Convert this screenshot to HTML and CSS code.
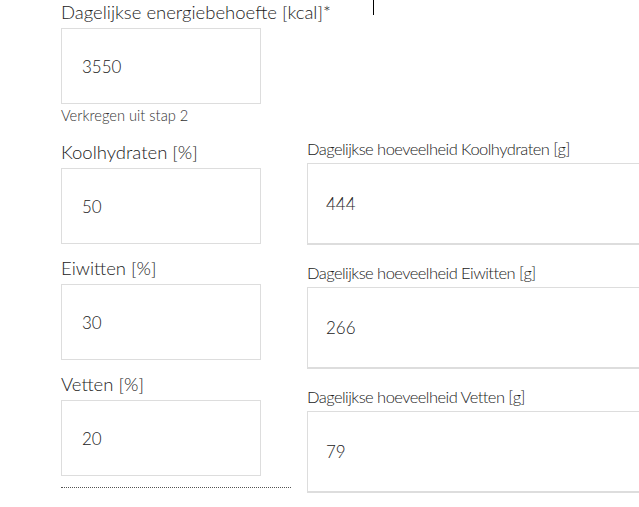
FILE: index.html
```html
<!DOCTYPE html>
<html lang="nl">
<head>
    <meta charset="UTF-8">
    <meta name="viewport" content="width=device-width, initial-scale=1.0">
    <title>Macronutriënten</title>
    <link rel="stylesheet" href="styles.css">
</head>
<body>
    <span class="cursor"></span>
    <div class="form">
        <div class="field energy">
            <label class="label" for="kcal">Dagelijkse energiebehoefte [kcal]*</label>
            <input class="input" id="kcal" type="text" value="3550">
            <p class="hint">Verkregen uit stap 2</p>
        </div>
        <div class="columns">
            <div class="col-left">
                <div class="field">
                    <label class="label" for="kh">Koolhydraten [%]</label>
                    <input class="input" id="kh" type="text" value="50">
                </div>
                <div class="field">
                    <label class="label" for="ei">Eiwitten [%]</label>
                    <input class="input" id="ei" type="text" value="30">
                </div>
                <div class="field">
                    <label class="label" for="ve">Vetten [%]</label>
                    <input class="input" id="ve" type="text" value="20">
                </div>
                <div class="divider"></div>
            </div>
            <div class="col-right">
                <div class="field">
                    <label class="label small" for="khg">Dagelijkse hoeveelheid Koolhydraten [g]</label>
                    <input class="input wide" id="khg" type="text" value="444" readonly>
                </div>
                <div class="field">
                    <label class="label small" for="eig">Dagelijkse hoeveelheid Eiwitten [g]</label>
                    <input class="input wide" id="eig" type="text" value="266" readonly>
                </div>
                <div class="field">
                    <label class="label small" for="veg">Dagelijkse hoeveelheid Vetten [g]</label>
                    <input class="input wide" id="veg" type="text" value="79" readonly>
                </div>
            </div>
        </div>
    </div>
</body>
</html>
```

FILE: styles.css
```css
body {
    margin: 0;
    font-family: Lato, 'Open Sans', sans-serif;
    font-weight: 300;
    color: #222;
    background: #fff;
    overflow: hidden;
}
.cursor {
    position: absolute;
    left: 373px;
    top: 0;
    width: 1px;
    height: 15px;
    background: #000;
}
.form {
    padding: 1px 0 0 61px;
}
.field {
    display: flex;
    flex-direction: column;
}
.label {
    font-size: 18.5px;
    line-height: 22px;
    margin-bottom: 5px;
}
.input {
    box-sizing: border-box;
    width: 200px;
    height: 76px;
    border: 1px solid #ddd;
    padding: 0 0 0 20px;
    font-family: inherit;
    font-weight: 300;
    font-size: 17px;
    color: #222;
    outline: none;
}
.hint {
    margin: 2px 0 0;
    font-size: 14.7px;
    color: #333;
}
.columns {
    display: flex;
    gap: 16px;
    margin-top: 12px;
}
.col-left {
    flex: none;
    width: 230px;
    display: flex;
    flex-direction: column;
    gap: 11px;
    padding-top: 5px;
}
.col-left .field + .field {
    margin-top: 2px;
}
.divider {
    border-top: 1px dotted #555;
    margin-top: 0;
}
.col-right {
    flex: none;
    width: 360px;
    display: flex;
    flex-direction: column;
    gap: 17px;
    padding-top: 2px;
}
.small {
    font-size: 16.5px;
    letter-spacing: -0.55px;
    margin-bottom: 3px;
}
.wide {
    width: 360px;
    height: 82px;
    border-bottom-width: 2px;
    padding-left: 18px;
}
```
